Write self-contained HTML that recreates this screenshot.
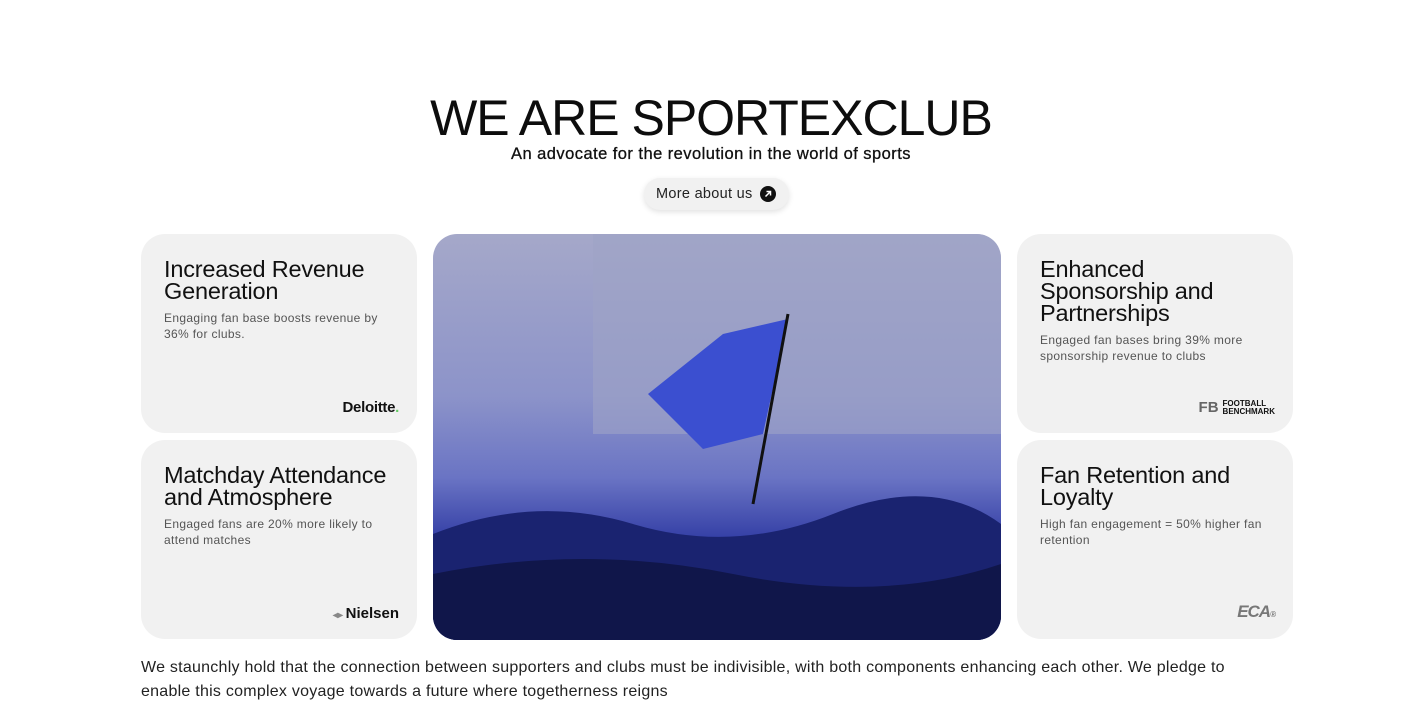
<!DOCTYPE html>
<html><head><meta charset="utf-8"><style>
*{margin:0;padding:0;box-sizing:border-box}
body{width:1422px;height:725px;background:#fff;font-family:"Liberation Sans",sans-serif;color:#111;position:relative;overflow:hidden}
h1{position:absolute;top:89px;left:0;width:1422px;text-align:center;font-size:50px;font-weight:400;letter-spacing:-1px;color:#0d0d0d}
.sub{position:absolute;top:145px;left:0;width:1422px;text-align:center;font-size:16.5px;color:#111;letter-spacing:.45px;-webkit-text-stroke:.3px #111}
.btn{position:absolute;left:644px;top:178px;width:145px;height:32px;border-radius:16px;background:#f1f1f1;box-shadow:0 2px 6px rgba(0,0,0,.12);font-size:14.5px;line-height:32px;padding-left:12px;color:#222;letter-spacing:.3px}
.btn i{position:absolute;right:13px;top:8px;width:16px;height:16px;border-radius:50%;background:#111}
.btn i svg{display:block}
.card{position:absolute;width:276px;height:199px;background:#f1f1f1;border-radius:24px;padding:24px 23px}
.card h3{font-size:23.5px;font-weight:400;line-height:22px;letter-spacing:-.2px;color:#111;width:230px}
.card p{font-size:12px;line-height:16px;color:#555;margin-top:8px;letter-spacing:.35px;width:225px}
.logo{position:absolute;right:18px;bottom:17px}
.img{position:absolute;left:433px;top:234px;width:568px;height:406px;border-radius:24px;overflow:hidden;
background:linear-gradient(180deg,#a5a8c9 0%,#8c93c9 40%,#6a74c4 60%,#2a35a0 78%,#161d5c 100%)}
.foot{position:absolute;left:141px;top:656px;width:1110px;font-size:16px;line-height:24px;color:#222;letter-spacing:.25px}
</style></head><body>
<h1>WE ARE SPORTEXCLUB</h1>
<div class="sub">An advocate for the revolution in the world of sports</div>
<div class="btn">More about us<i><svg width="16" height="16" viewBox="0 0 16 16"><path d="M5.5 10.5L10.5 5.5M6.5 5.5h4v4" stroke="#fff" stroke-width="1.5" fill="none"/></svg></i></div>
<div class="card" style="left:141px;top:234px"><h3>Increased Revenue Generation</h3><p>Engaging fan base boosts revenue by 36% for clubs.</p><div class="logo" style="font-weight:700;font-size:15px;letter-spacing:-.3px">Deloitte<span style="color:#6c6">.</span></div></div>
<div class="card" style="left:141px;top:440px"><h3>Matchday Attendance and Atmosphere</h3><p>Engaged fans are 20% more likely to attend matches</p><div class="logo" style="font-size:15px;font-weight:700"><span style="color:#888;font-size:10px">◂▸ </span>Nielsen</div></div>
<div class="img">
<svg width="568" height="406" viewBox="0 0 568 406">
<rect x="160" y="0" width="408" height="200" fill="#9ea3c6" opacity=".6"/>
<path d="M215 160 L290 100 L355 85 L330 200 L270 215 Z" fill="#3b4fd0"/>
<path d="M355 80 L320 270" stroke="#111" stroke-width="3"/>
<path d="M0 300 Q100 260 200 290 T400 280 T568 290 V406 H0Z" fill="#1a2370"/>
<path d="M0 340 Q150 310 300 340 T568 330 V406 H0Z" fill="#10164a"/>
</svg></div>
<div class="card" style="left:1017px;top:234px"><h3 style="width:200px">Enhanced Sponsorship and Partnerships</h3><p>Engaged fan bases bring 39% more sponsorship revenue to clubs</p><div class="logo" style="font-size:8px;font-weight:700;line-height:8px;display:flex;gap:4px;align-items:center"><span style="font-size:15px;color:#666">FB</span><span>FOOTBALL<br>BENCHMARK</span></div></div>
<div class="card" style="left:1017px;top:440px"><h3>Fan Retention and Loyalty</h3><p>High fan engagement = 50% higher fan retention</p><div class="logo" style="font-size:17px;font-weight:700;font-style:italic;color:#777;letter-spacing:-1px">ECA<span style="font-size:8px">®</span></div></div>
<div class="foot">We staunchly hold that the connection between supporters and clubs must be indivisible, with both components enhancing each other. We pledge to enable this complex voyage towards a future where togetherness reigns</div>
</body></html>
